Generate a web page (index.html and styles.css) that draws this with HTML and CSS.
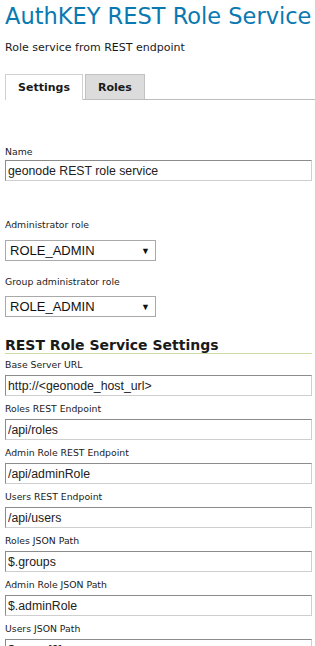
FILE: index.html
```html
<!DOCTYPE html>
<html lang="en">
<head>
    <meta charset="UTF-8">
    <meta name="viewport" content="width=device-width, initial-scale=1.0">
    <title>AuthKEY REST Role Service</title>
    <link rel="stylesheet" href="styles.css">
</head>
<body>
    <div class="page">
        <h1 class="page-title">AuthKEY REST Role Service</h1>
        <p class="page-subtitle">Role service from REST endpoint</p>

        <ul class="tabs">
            <li class="tab active">Settings</li>
            <li class="tab">Roles</li>
        </ul>

        <form class="settings">
            <div class="field name-field">
                <label>Name</label>
                <input class="text-input" type="text" value="geonode REST role service">
            </div>

            <div class="field select-field first-select">
                <label>Administrator role</label>
                <div class="select-box"><span>ROLE_ADMIN</span><span class="arrow">&#9660;</span></div>
            </div>

            <div class="field select-field">
                <label>Group administrator role</label>
                <div class="select-box"><span>ROLE_ADMIN</span><span class="arrow">&#9660;</span></div>
            </div>

            <h3 class="section-title">REST Role Service Settings</h3>

            <div class="field first-in-section">
                <label>Base Server URL</label>
                <input class="text-input" type="text" value="http://&lt;geonode_host_url&gt;">
            </div>
            <div class="field">
                <label>Roles REST Endpoint</label>
                <input class="text-input" type="text" value="/api/roles">
            </div>
            <div class="field">
                <label>Admin Role REST Endpoint</label>
                <input class="text-input" type="text" value="/api/adminRole">
            </div>
            <div class="field">
                <label>Users REST Endpoint</label>
                <input class="text-input" type="text" value="/api/users">
            </div>
            <div class="field">
                <label>Roles JSON Path</label>
                <input class="text-input" type="text" value="$.groups">
            </div>
            <div class="field">
                <label>Admin Role JSON Path</label>
                <input class="text-input" type="text" value="$.adminRole">
            </div>
            <div class="field">
                <label>Users JSON Path</label>
                <input class="text-input" type="text" value="$.users[0]">
            </div>
        </form>
    </div>
</body>
</html>
```

FILE: styles.css
```css
body {
    margin: 0;
    background-color: #fff;
    font-family: "DejaVu Sans", Verdana, sans-serif;
    color: #1a1a1a;
}

.page {
    width: 307px;
    padding: 0 3px 0 5px;
}

.page-title {
    margin: 0;
    font-size: 22.5px;
    line-height: 32px;
    font-weight: normal;
    color: #0a79b1;
    white-space: nowrap;
}

.page-subtitle {
    margin: 9px 0 0;
    font-size: 11px;
    line-height: 14px;
}

.tabs {
    list-style: none;
    margin: 19px -3px 0 0;
    padding: 0;
    display: flex;
    gap: 2px;
    border-bottom: 1px solid #bdbdbd;
}

.tab {
    box-sizing: border-box;
    height: 25px;
    padding: 4px 12px 0;
    line-height: 18px;
    font-size: 11px;
    font-weight: bold;
    border: 1px solid #c2c2c2;
    border-bottom: none;
    background-color: #dcdcdc;
}

.tab.active {
    height: 26px;
    margin-bottom: -1px;
    background-color: #fff;
    border-color: #d0d0d0;
}

.field label {
    display: block;
    margin: 6px 0 3px;
    font-size: 9.3px;
    line-height: 14px;
}

.name-field label {
    margin-top: 45px;
    margin-bottom: 1px;
}

.select-field label {
    margin-top: 14px;
    margin-bottom: 7px;
}

.first-select label {
    margin-top: 37px;
    margin-bottom: 8px;
}

.first-in-section label {
    margin-top: 4px;
}

.text-input {
    display: block;
    box-sizing: border-box;
    width: 100%;
    height: 21px;
    margin: 0;
    padding: 0 2px;
    border: 1px solid;
    border-color: #8c8c8c #cfcfcf #cfcfcf #8c8c8c;
    font-family: "Liberation Sans", Arial, sans-serif;
    font-size: 12.3px;
    color: #222;
    background-color: #fff;
}

.select-box {
    box-sizing: border-box;
    width: 151px;
    height: 21px;
    padding: 0 5px 0 4px;
    border: 1px solid #a9a9a9;
    display: flex;
    align-items: center;
    justify-content: space-between;
    font-family: "Liberation Sans", Arial, sans-serif;
    font-size: 13px;
    color: #111;
}

.select-box .arrow {
    font-size: 9px;
    color: #111;
}

.section-title {
    margin: 20px 0 0;
    font-size: 14px;
    line-height: 16px;
    font-weight: bold;
    border-bottom: 1px solid #c9dca4;
}
```
